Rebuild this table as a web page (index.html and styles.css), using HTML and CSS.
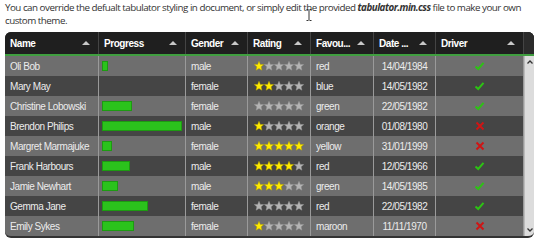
FILE: index.html
```html
<!DOCTYPE html>
<html>
<head>
<meta charset="utf-8">
<link rel="stylesheet" href="styles.css">
</head>
<body>
<p class="intro">You can override the defualt tabulator styling in document, or simply edit the provided <b><i>tabulator.min.css</i></b> file to make your own custom theme.</p>
<svg class="cursor" width="6" height="12" viewBox="0 0 6 12"><path d="M0.5 0.5h2M3.5 0.5h2M3 1v10M0.5 11.5h2M3.5 11.5h2" stroke="#333" stroke-width="1" fill="none"/></svg>
<div class="table">
  <div class="thead">
    <div class="th">Name<span class="sort"></span></div>
    <div class="th">Progress<span class="sort"></span></div>
    <div class="th">Gender<span class="sort"></span></div>
    <div class="th">Rating<span class="sort"></span></div>
    <div class="th">Favou...<span class="sort"></span></div>
    <div class="th">Date ...<span class="sort"></span></div>
    <div class="th">Driver<span class="sort"></span></div>
    <div class="gutter"></div>
  </div>
  <div class="tbody">
    <div class="rows" id="rows"></div>
    <div class="scrollbar">
      <svg class="arr" width="10" height="8" viewBox="0 0 10 8"><path d="M2.5 5.5L5 3L7.5 5.5" stroke="#333" stroke-width="1.3" fill="none"/></svg>
      <div class="track"></div>
      <svg class="arr" width="10" height="8" viewBox="0 0 10 8"><path d="M2.5 2.5L5 5L7.5 2.5" stroke="#333" stroke-width="1.3" fill="none"/></svg>
    </div>
  </div>
</div>
<script src="app.js"></script>
</body>
</html>
```
FILE: app.js
```js
const data = [
  ["Oli Bob", 7, "male", 1, "red", "14/04/1984", true],
  ["Mary May", 0, "female", 2, "blue", "14/05/1982", true],
  ["Christine Lobowski", 38, "female", 0, "green", "22/05/1982", true],
  ["Brendon Philips", 100, "male", 1, "orange", "01/08/1980", false],
  ["Margret Marmajuke", 12, "female", 5, "yellow", "31/01/1999", false],
  ["Frank Harbours", 35, "male", 4, "red", "12/05/1966", true],
  ["Jamie Newhart", 20, "male", 3, "green", "14/05/1985", true],
  ["Gemma Jane", 58, "female", 0, "red", "22/05/1982", true],
  ["Emily Sykes", 40, "female", 1, "maroon", "11/11/1970", false]
];
const star = (on) => `<svg class="star" width="10" height="10" viewBox="0 0 10 10"><polygon points="5,0.3 6.3,3.4 9.7,3.6 7.1,5.8 7.9,9.2 5,7.4 2.1,9.2 2.9,5.8 0.3,3.6 3.7,3.4" fill="${on ? '#ffea00' : '#b4b4b4'}" stroke="${on ? '#b8a800' : '#999'}" stroke-width="0.5"/></svg>`;
const tick = `<svg width="11" height="10" viewBox="0 0 11 10"><path d="M1.5 5.5L4.2 8L9.5 1.8" stroke="#2dc214" stroke-width="2" fill="none"/></svg>`;
const cross = `<svg width="10" height="10" viewBox="0 0 10 10"><path d="M1.5 1.5L8.5 8.5M8.5 1.5L1.5 8.5" stroke="#ce1515" stroke-width="2" fill="none"/></svg>`;
const rows = document.getElementById('rows');
rows.innerHTML = data.map((r, i) => {
  let stars = '';
  for (let s = 0; s < 5; s++) stars += star(s < r[3]);
  return `<div class="tr ${i % 2 ? 'even' : 'odd'}">
    <div class="td">${r[0]}</div>
    <div class="td prog">${r[1] ? `<div class="bar" style="width:${r[1]}%"></div>` : ''}</div>
    <div class="td">${r[2]}</div>
    <div class="td stars">${stars}</div>
    <div class="td">${r[4]}</div>
    <div class="td center">${r[5]}</div>
    <div class="td center">${r[6] ? tick : cross}</div>
  </div>`;
}).join('');
```
FILE: styles.css
```css
html, body { margin: 0; padding: 0; background: #fff; }
body { padding: 1px 5px 0 5px; position: relative; }
.intro {
  margin: 0;
  font-family: "Open Sans", sans-serif;
  font-size: 9.8px;
  letter-spacing: -0.5px;
  line-height: 13px;
  color: #333;
  width: 530px;
}
.cursor { position: absolute; left: 306px; top: 9px; }
.table {
  margin-top: 5px;
  width: 529px;
  border-radius: 6px;
  overflow: hidden;
  background: #333;
  font-family: "Liberation Sans", Arial, sans-serif;
  font-size: 10px;
  letter-spacing: -0.45px;
  border-bottom: 2px solid #333;
}
.thead {
  display: grid;
  grid-template-columns: 94px 87px 62px 63px 63px 62px 88px 10px;
  height: 22px;
  background: #1f1f1f;
  border-bottom: 2px solid #3f9e3f;
}
.th {
  display: flex;
  align-items: center;
  justify-content: space-between;
  padding: 0 8px 0 5px;
  color: #fff;
  font-weight: bold;
  border-right: 1px solid #444;
}
.sort {
  width: 0; height: 0;
  border-left: 4px solid transparent;
  border-right: 4px solid transparent;
  border-bottom: 4px solid #c8c8c8;
}
.gutter { background: #2b2b2b; }
.tbody { display: flex; }
.rows { width: 519px; }
.tr {
  display: grid;
  grid-template-columns: 94px 87px 62px 63px 63px 62px 88px;
  height: 20px;
}
.tr.odd { background: #6e6e6e; }
.tr.even { background: #454545; }
.td {
  display: flex;
  align-items: center;
  padding: 0 5px;
  color: #ececec;
  border-right: 1px solid #9a9a9a;
  white-space: nowrap;
  overflow: hidden;
}
.td.center { justify-content: center; }
.td.prog { padding: 0 3px; }
.bar {
  height: 10px;
  background: #2bc21c;
  border: 1px solid #1d9a12;
  box-sizing: border-box;
}
.stars { gap: 0; padding-left: 6px; }
.star { display: block; }
.scrollbar {
  width: 10px;
  display: flex;
  flex-direction: column;
  background: #dcdcdc;
  border-left: 1px solid #bbb;
}
.arr { display: block; margin: 2px 0; }
.track { flex: 1; }
```
